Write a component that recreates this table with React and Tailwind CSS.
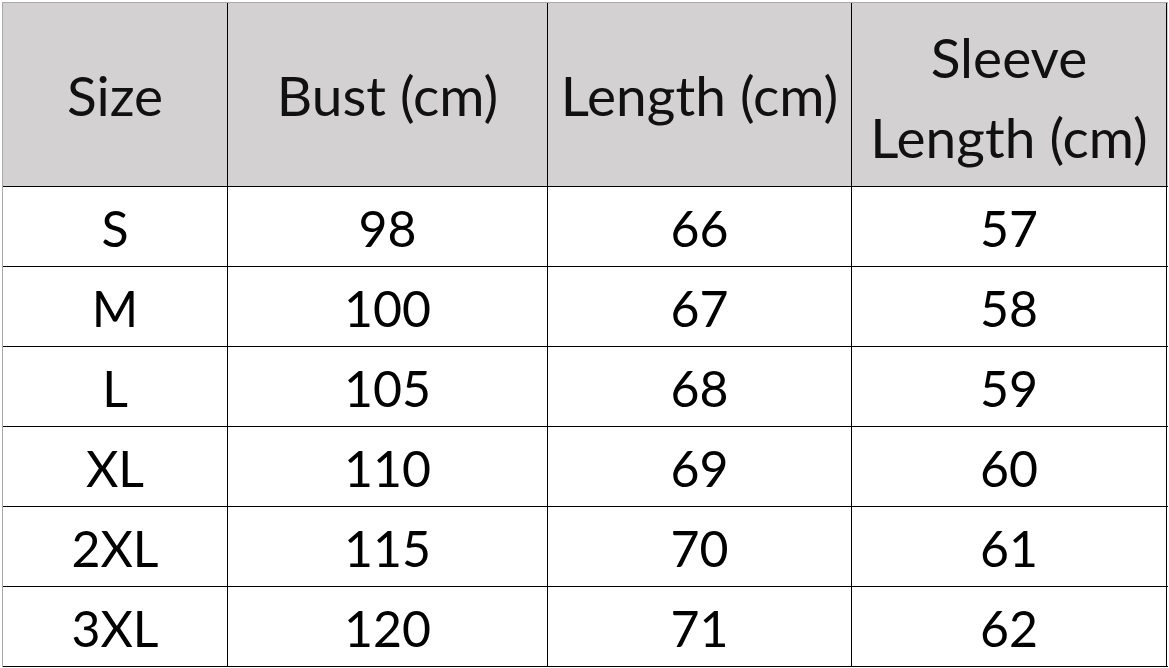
export default function App() {
  const rows = [
    ["S", "98", "66", "57"],
    ["M", "100", "67", "58"],
    ["L", "105", "68", "59"],
    ["XL", "110", "69", "60"],
    ["2XL", "115", "70", "61"],
    ["3XL", "120", "71", "62"],
  ];
  const font = { fontFamily: "Lato, 'Open Sans', sans-serif" };
  return (
    <div className="w-[1169px] h-[668px] bg-white overflow-hidden pt-[2px] pl-[2px]" style={font}>
      <div className="w-[1166px] border-t border-l border-[#a9a9a9]">
        <div className="grid grid-cols-[225px_320px_304px_315px] bg-[#d3d1d2] h-[183px] text-[55px] leading-[1.2] text-[#111]">
          <div className="flex items-center justify-center border-r border-black">Size</div>
          <div className="flex items-center justify-center border-r border-black">Bust (cm)</div>
          <div className="flex items-center justify-center border-r border-black whitespace-nowrap">Length (cm)</div>
          <div className="flex items-center justify-center text-center border-r border-black leading-[80px] whitespace-nowrap pt-[4px]">Sleeve<br />Length (cm)</div>
        </div>
        {rows.map((r, i) => (
          <div key={i} className="grid grid-cols-[225px_320px_304px_315px] h-[80px] border-t border-black text-[50px] text-black">
            {r.map((c, j) => (
              <div key={j} className="flex items-center justify-center border-r border-black pt-[4px]">{c}</div>
            ))}
          </div>
        ))}
        <div className="border-t border-black"></div>
      </div>
    </div>
  );
}
